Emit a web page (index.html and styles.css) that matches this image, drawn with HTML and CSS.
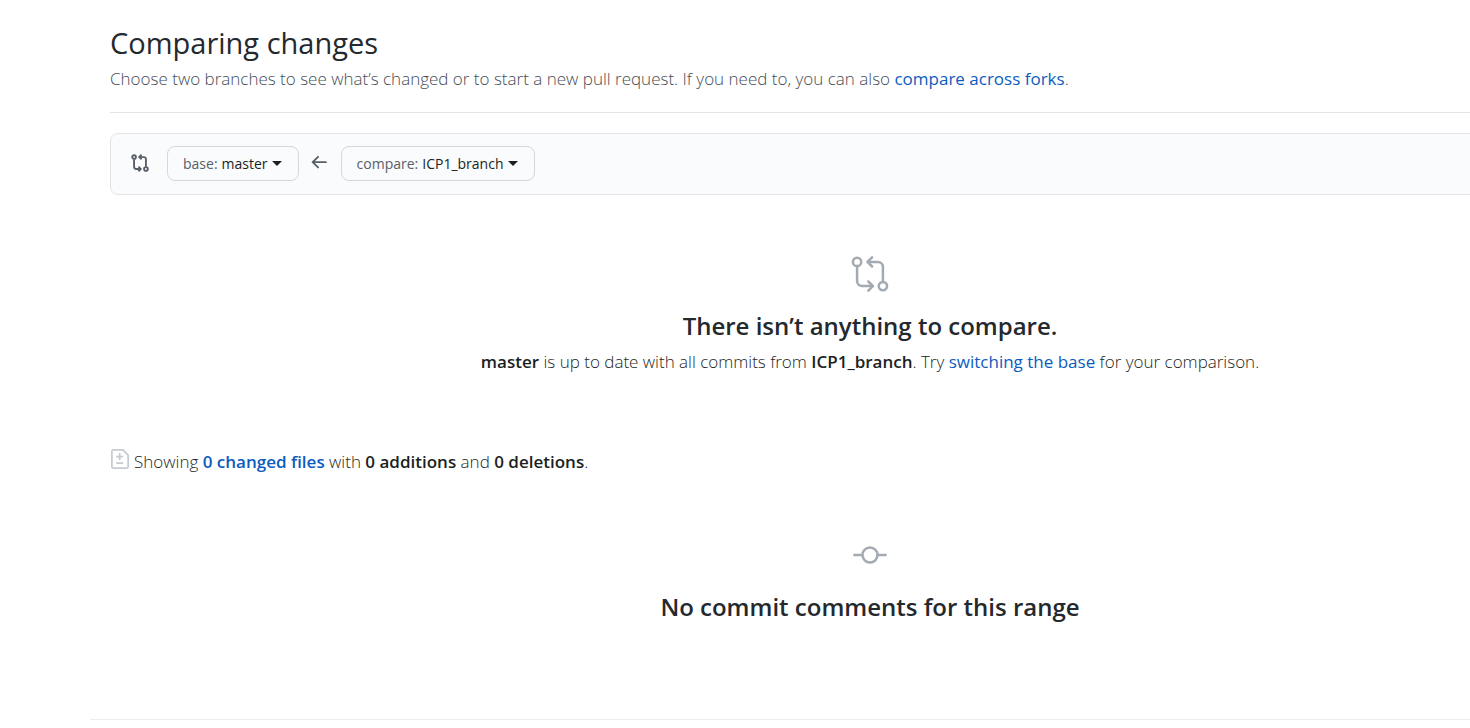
FILE: index.html
```html
<!DOCTYPE html>
<html lang="en">
<head>
<meta charset="utf-8">
<title>Comparing changes</title>
<link rel="stylesheet" href="styles.css">
</head>
<body>
<div class="page">
<main class="container">
  <header class="subhead">
    <h1 class="title">Comparing changes</h1>
    <p class="description">Choose two branches to see what’s changed or to start a new pull request. If you need to, you can also <a href="#forks">compare across forks</a>.</p>
  </header>

  <div class="range-editor">
    <svg class="icon icon-compare" viewBox="0 0 16 16" aria-hidden="true">
      <g fill="none" stroke="currentColor" stroke-width="1.5">
        <circle cx="3.25" cy="3.25" r="1.5"/>
        <circle cx="12.75" cy="12.75" r="1.5"/>
        <path d="M3.25 5v6c0 .97.78 1.75 1.75 1.75h3M12.75 11V5c0-.97-.78-1.75-1.75-1.75H8"/>
        <path d="M9.25 1.4 7.4 3.25 9.25 5.1M6.75 10.9l1.85 1.85-1.85 1.85"/>
      </g>
    </svg>
    <button class="branch-button" type="button"><span class="branch-label">base:</span> master <span class="caret"></span></button>
    <svg class="icon icon-arrow" viewBox="0 0 16 16" aria-hidden="true">
      <path d="M7.25 2.25 2.9 6.5l4.35 4.25M3 6.5h10.5" fill="none" stroke="currentColor" stroke-width="1.5" stroke-linecap="round" stroke-linejoin="round"/>
    </svg>
    <button class="branch-button" type="button"><span class="branch-label">compare:</span> ICP1_branch <span class="caret"></span></button>
  </div>

  <section class="blankslate">
    <svg class="blank-icon" viewBox="0 0 24 24" aria-hidden="true">
      <g fill="none" stroke="currentColor" stroke-width="1.5" stroke-linecap="round" stroke-linejoin="round">
        <circle cx="4.25" cy="4.75" r="2.5"/>
        <circle cx="19.75" cy="19.25" r="2.5"/>
        <path d="M4.25 7.25v9a3 3 0 0 0 3 3h6.5M19.75 16.75v-9a3 3 0 0 0-3-3h-6"/>
        <path d="m13.25 2-2.75 2.75 2.75 2.75M11 16.5l2.75 2.75L11 22"/>
      </g>
    </svg>
    <h2 class="blank-title">There isn’t anything to compare.</h2>
    <p class="blank-text"><strong>master</strong> is up to date with all commits from <strong>ICP1_branch</strong>. Try <a href="#switch">switching the base</a> for your comparison.</p>
  </section>

  <div class="summary">
    <svg class="icon icon-diff" viewBox="0 0 16 16" aria-hidden="true">
      <path d="M2.5.75h7.9l4.1 4.1v9.4a1 1 0 0 1-1 1h-11a1 1 0 0 1-1-1V1.75a1 1 0 0 1 1-1zM5 6h5.5M7.75 3.25v5.5M5 11.25h5.5" fill="none" stroke="currentColor" stroke-width="1.4"/>
    </svg>
    <p class="summary-text">Showing <a class="strong-link" href="#files">0 changed files</a> with <strong>0 additions</strong> and <strong>0 deletions</strong>.</p>
  </div>

  <section class="blankslate comments">
    <svg class="blank-icon" viewBox="0 0 24 24" aria-hidden="true">
      <path d="M2 12h5.5M16.5 12H22" fill="none" stroke="currentColor" stroke-width="1.5"/>
      <circle cx="12" cy="12" r="4.5" fill="none" stroke="currentColor" stroke-width="1.5"/>
    </svg>
    <h2 class="blank-title">No commit comments for this range</h2>
  </section>
</main>
<hr class="footer-line">
</div>
</body>
</html>
```
FILE: styles.css
```css
* { box-sizing: border-box; }

body {
  margin: 0;
  background: #fff;
  color: #1b1f23;
  font-family: "Segoe UI", "Open Sans", sans-serif;
  font-size: 17px;
  font-weight: 300;
  line-height: 26px;
}

h1, h2, p { margin: 0; }
a { color: #0c5cc0; font-weight: 400; text-decoration: none; }
strong, .strong-link { font-weight: 600; }

.page { overflow: hidden; }

/* The content column runs past the right side of the window. */
.container {
  margin: 0 -160px 0 110px;
  padding-top: 20px;
}

.subhead {
  padding-bottom: 20px;
  border-bottom: 1px solid #e1e4e8;
}

.title {
  color: #24292e;
  font-size: 29px;
  font-weight: 400;
  line-height: 46px;
}

.description { color: #444d56; }

.range-editor {
  display: flex;
  align-items: flex-start;
  margin-top: 20px;
  padding: 12px 20px 13px;
  border: 1px solid #e1e4e8;
  border-radius: 8px;
  background: #fafbfd;
}

.icon {
  flex: none;
  width: 20px;
  height: 20px;
  color: #586069;
}

.icon-compare { margin: 7px 17px 0 -1px; }
.icon-arrow { margin: 8px 12px 0 10px; }

.branch-button {
  display: flex;
  align-items: center;
  gap: 4px;
  height: 35px;
  padding: 0 16px 0 15px;
  border: 1px solid #d5d8dc;
  border-radius: 8px;
  background: #fafbfc;
  color: #1b1f23;
  font: 400 14px/24px "Segoe UI", "Open Sans", sans-serif;
}

.branch-label { color: #586069; }

.caret {
  border: 5px solid transparent;
  border-top-color: currentColor;
  border-bottom: 0;
}

.blankslate {
  display: flex;
  flex-direction: column;
  align-items: center;
  padding-top: 59px;
  text-align: center;
}

.blank-icon {
  width: 40px;
  height: 40px;
  color: #a3aab1;
}

.blank-title {
  margin-top: 14px;
  color: #24292e;
  font-size: 24px;
  font-weight: 600;
  line-height: 36px;
}

.blank-text { margin-top: 5px; }

.summary {
  display: flex;
  align-items: flex-start;
  gap: 4px;
  margin-top: 74px;
}

.icon-diff { color: #c6cbd1; }

.comments { padding-top: 60px; }

.footer-line {
  margin: 94px 0 0 90px;
  border: 0;
  border-top: 1px solid #eaecef;
}
```
